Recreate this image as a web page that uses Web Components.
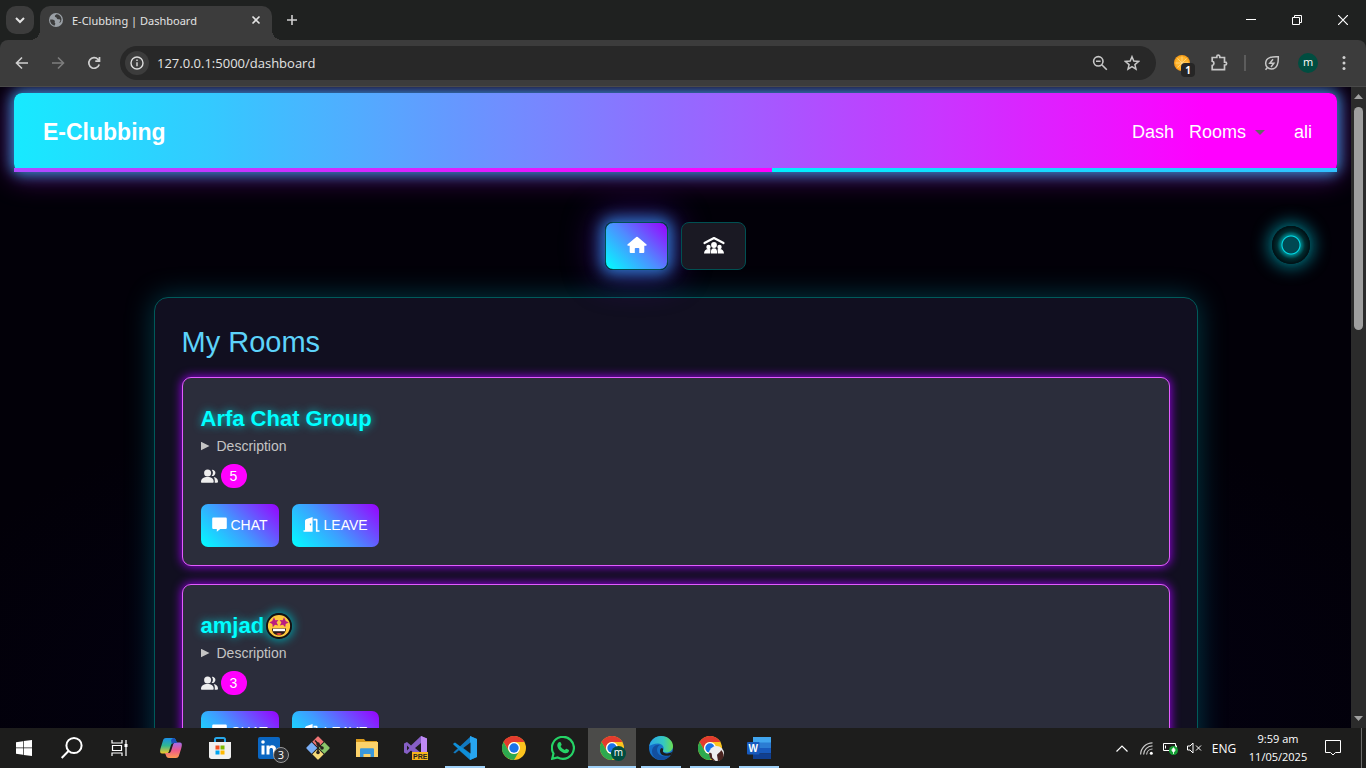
<!DOCTYPE html>
<html lang="en">
<head>
<meta charset="utf-8">
<title>E-Clubbing | Dashboard</title>
<style>
html, body { margin: 0; height: 100%; background: #000; }
body { display: flex; flex-direction: column; overflow: hidden; font-family: "Open Sans", "Noto Sans", sans-serif; }
page-view { flex: 1; min-height: 0; }
</style>
</head>
<body>
<browser-tabs></browser-tabs>
<browser-toolbar></browser-toolbar>
<page-view>
  <club-nav></club-nav>
  <view-switch></view-switch>
  <room-panel heading="My Rooms">
    <room-card members="5">Arfa Chat Group</room-card>
    <room-card members="3">amjad<star-face></star-face></room-card>
  </room-panel>
</page-view>
<task-bar></task-bar>

<script>
const reset = `:host,*{box-sizing:border-box}button,input{font:inherit;color:inherit;background:none;border:0;padding:0;margin:0}
button{display:flex;align-items:center;justify-content:center}a{color:inherit;text-decoration:none}svg{display:block;flex:none}`;

function define(name, css, html) {
  customElements.define(name, class extends HTMLElement {
    constructor() {
      super();
      this.attachShadow({ mode: 'open' }).innerHTML =
        `<style>${reset}${css}</style>` + (typeof html === 'function' ? html(this) : html);
    }
  });
}

const chromeLogo = size => `<svg width="${size}" height="${size}" viewBox="0 0 48 48"><circle cx="24" cy="24" r="24" fill="#fcc31e"/>
<path d="M3.2 12A24 24 0 0 1 44.8 12H24A12 12 0 0 0 13.6 30Z" fill="#e33b2e"/>
<path d="M3.2 12A24 24 0 0 0 24 48L34.4 30A12 12 0 0 1 13.6 30Z" fill="#2da94f"/>
<circle cx="24" cy="24" r="12" fill="#fff"/><circle cx="24" cy="24" r="9.4" fill="#1a73e8"/></svg>`;

define('browser-tabs', `
:host{display:flex;height:40px;background:#1f2120;color:#e3e3e3;padding-left:6px;align-items:flex-end;flex:none}
.search{width:28px;height:28px;border-radius:10px;background:#3c3c3c;align-self:center}
.tab{display:flex;align-items:center;width:232px;height:34px;margin-left:6px;padding:0 8px 6px;border-radius:10px 10px 0 0;background:#3c3c3c;position:relative}
.tab::before,.tab::after{content:"";position:absolute;bottom:0;width:10px;height:10px}
.tab::before{left:-10px;background:radial-gradient(circle at 0 0,transparent 10px,#3c3c3c 10px)}
.tab::after{right:-10px;background:radial-gradient(circle at 100% 0,transparent 10px,#3c3c3c 10px)}
.tab a{flex:1;margin-left:8px;white-space:nowrap;font-family:"Noto Sans",sans-serif;font-size:11px}
.tab button{width:16px;height:28px}.new{width:40px;height:40px}
.win{margin-left:auto;display:flex}.win button{width:46px;height:40px}`, `
<button class="search" aria-label="Search tabs"><svg width="10" height="8" viewBox="0 0 10 8"><path d="M1 2l4 4 4-4" fill="none" stroke="#e3e3e3" stroke-width="2"/></svg></button>
<div class="tab"><svg width="16" height="16" viewBox="0 0 16 16"><circle cx="8" cy="8" r="7" fill="#9aa0a6"/><path d="M2.200 7.600c1.800-.2 4 .2 4.600 1.200.5.800-.6 1.400.2 2.200.8.700 0 2-.6 2.800-2.600-.7-4.600-3.200-4.200-6.200zM8.500 2.200c-.8.800-2 1-1.600 2.200.3.800 1.600.6 1.800 1.500.2 1 1.300 1.600 2.300 1.300 1-.3 1.500.6 1.300 1.600-.1.900-1.100 1.200-.8 2.200 1.600-1 2.200-2.900 1.900-4.600-.5-2.300-2.500-4.200-4.900-4.200z" fill="#3c3c3c"/></svg>
<a href="#">E-Clubbing | Dashboard</a><button aria-label="Close tab"><svg width="10" height="10" viewBox="0 0 10 10"><path d="M1.500 1.500l7 7m0-7l-7 7" stroke="#e3e3e3" stroke-width="1.600"/></svg></button></div>
<button class="new" aria-label="New tab"><svg width="12" height="12" viewBox="0 0 12 12"><path d="M6 1v10M1 6h10" stroke="#d0d0d0" stroke-width="1.600"/></svg></button>
<div class="win">
<button aria-label="Minimize"><svg width="10" height="10"><path d="M0 4.500h10" stroke="#fff"/></svg></button>
<button aria-label="Restore"><svg width="10" height="10" fill="none" stroke="#fff"><path d="M.5 2.500h7v7h-7zM2.500 2.500v-2h7v7h-2"/></svg></button>
<button aria-label="Close"><svg width="10" height="10"><path d="M0 0l10 10M10 0L0 10" stroke="#fff" stroke-width="1.200"/></svg></button>
</div>`);

define('browser-toolbar', `
:host{display:block;background:#1f2120;flex:none}
.bar{display:flex;align-items:center;height:47px;padding:0 4px;background:#3c3c3c;border-radius:8px 8px 0 0;border-bottom:1px solid #4a4a4a;color:#e3e3e3}
.bar>button{width:36px;height:36px;position:relative}
.omni{flex:1;display:flex;align-items:center;height:34px;margin:0 9px 0 8px;padding:0 8px 0 5px;border-radius:17px;background:#282828}
.info{width:24px;height:24px;border-radius:50%;background:#3c3c3c}
input{flex:1;min-width:0;margin:0 8px;font-size:13px;outline:0}
.omni button:not(.info){width:32px;height:32px}
.sep{width:2px;height:16px;margin:0 8px 0 7px;background:#5c5c5c}
.count{position:absolute;left:16px;top:18px;width:14px;height:14px;border-radius:4px;background:#262626;color:#fff;font:bold 10px/14px "Open Sans",sans-serif;text-align:center}
.me{width:20px;height:20px;border-radius:50%;background:#004d40;color:#fff;font:11px/18px "Open Sans",sans-serif}`, `
<div class="bar">
<button aria-label="Back"><svg width="14" height="14" viewBox="0 0 14 14" fill="none" stroke="#d0d0d0" stroke-width="1.600"><path d="M13 7H2M7 1.500L1.500 7 7 12.500"/></svg></button>
<button aria-label="Forward"><svg width="14" height="14" viewBox="0 0 14 14" fill="none" stroke="#7d7d7d" stroke-width="1.600"><path d="M1 7h11M7 1.500L12.500 7 7 12.500"/></svg></button>
<button aria-label="Reload"><svg width="14" height="14" viewBox="0 0 14 14" fill="none" stroke="#d0d0d0" stroke-width="1.700"><path d="M12.200 8.500A5.300 5.300 0 1 1 11 3.300L12.300 4.800M12.500 1v4.200H8.300"/></svg></button>
<div class="omni">
<button class="info" aria-label="Site information"><svg width="14" height="14" viewBox="0 0 14 14" fill="none" stroke="#dcdcdc" stroke-width="1.400"><circle cx="7" cy="7" r="6"/><path d="M7 6.200v4M7 3.600v1.400"/></svg></button>
<input aria-label="Address" value="127.0.0.1:5000/dashboard">
<button aria-label="Zoom"><svg width="16" height="16" viewBox="0 0 16 16" fill="none" stroke="#c7c7c7" stroke-width="1.600"><circle cx="6.300" cy="6.300" r="4.700"/><path d="M9.800 9.800l5 5M4 6.300h4.600"/></svg></button>
<button aria-label="Bookmark"><svg width="16" height="16" viewBox="0 0 16 16" fill="none" stroke="#c7c7c7" stroke-width="1.500"><path d="M8 1.700l1.800 4.400 4.700.4-3.600 3.100 1.100 4.600L8 11.700l-4 2.500 1.100-4.600L1.500 6.500l4.700-.4z"/></svg></button>
</div>
<button aria-label="Extension, 1"><svg width="18" height="18" viewBox="0 0 18 18"><circle cx="8" cy="9" r="8" fill="#f9a01b"/><circle cx="8" cy="9" r="6.500" fill="#ffb52e"/><path d="M8 2.500v13M1.500 9h13M3.400 4.400l9.200 9.200m0-9.200l-9.200 9.200" stroke="#ffd98a" stroke-width=".8"/></svg><span class="count">1</span></button>
<button aria-label="Extensions"><svg width="18" height="18" viewBox="0 0 18 18" fill="none" stroke="#c7c7c7" stroke-width="1.700"><path d="M2.200 3.500h4.600V2.600a1.500 1.500 0 0 1 3 0v.9h4.700v4.700h.7a1.400 1.400 0 0 1 0 2.800h-.7v4.700H2.200v-4.200a2.200 2.200 0 0 0 0-4.300z"/></svg></button>
<span class="sep"></span>
<button aria-label="Performance"><svg width="16" height="16" viewBox="0 0 16 16" fill="none" stroke="#c7c7c7" stroke-width="1.500"><path d="M14.300 1.700C8 1.300 2 2.500 1.700 8c-.2 3.500 2.400 6 5.800 6 6 0 7-6.500 6.800-12.300zM1.500 14.800L3.500 12.500M9 4.200L5.800 8.300h4L7 12"/></svg></button>
<button aria-label="Profile"><span class="me">m</span></button>
<button aria-label="Menu"><svg width="4" height="16" fill="#d0d0d0"><circle cx="2" cy="2.500" r="1.500"/><circle cx="2" cy="8" r="1.500"/><circle cx="2" cy="13.500" r="1.500"/></svg></button>
</div>`);

define('page-view', `
:host{display:flex;background:#010006;color:#fff;font-family:"Liberation Sans",Arial,sans-serif;overflow:hidden}
main{flex:1;min-width:0;overflow:hidden;position:relative;padding:6px 14px 0;background:radial-gradient(ellipse 60% 60% at 50% 100%,#04021a,transparent),#020008}
.cursor{position:absolute;top:139px;right:41px;width:38px;height:38px;border-radius:50%;background:radial-gradient(circle,#004852 8px,#00e4f0 9px,#007a80 10px,#002c30 14px,#001418 18px);box-shadow:0 0 4px #004c55,0 0 16px 4px #006c7a}
.scroll{width:15px;flex:none;background:#2b2b2b;display:flex;flex-direction:column;align-items:center;padding:7px 0}
.thumb{width:9px;height:223px;border-radius:5px;background:#9f9f9f;margin:8px 0 auto}`, `
<main><slot></slot><div class="cursor"></div></main>
<div class="scroll"><svg width="9" height="5"><path d="M0 5L4.500 0 9 5z" fill="#a0a0a0"/></svg><div class="thumb"></div><svg width="9" height="5"><path d="M0 0l4.500 5L9 0z" fill="#a0a0a0"/></svg></div>`);

define('club-nav', `
:host{display:block}
header{position:relative;display:flex;align-items:center;height:79px;padding:0 25px 0 29px;border-radius:8px;background:linear-gradient(90deg,#17eaff,#34c9ff 15%,#f0f 90%);box-shadow:0 0 13px 3px rgba(50,180,240,.75),0 2px 28px 4px rgba(190,20,230,.42)}
header::after{content:"";position:absolute;left:0;right:0;bottom:0;height:4px;background:linear-gradient(90deg,#ad4cff,#f0f 57.300%,#00f0ff 57.300%,#33c0ff)}
.brand{font-size:23px;font-weight:bold}
nav{margin-left:auto;display:flex;align-items:center;font-size:18px}
nav button{margin:0 29px 0 15px}
nav svg{margin-left:9px}`, `
<header><a class="brand" href="#">E-Clubbing</a>
<nav><a href="#">Dash</a><button aria-haspopup="true">Rooms<svg width="10" height="5"><path d="M0 0h10L5 5z" fill="#666"/></svg></button><a href="#">ali</a></nav></header>`);

define('view-switch', `
:host{display:flex;justify-content:center;gap:13px;margin-top:50px}
button{width:65px;height:48px;padding-bottom:2px;border-radius:8px;border:1px solid #005052;background:#1a1923}
.on{width:63px;background:linear-gradient(45deg,#0ff,#4f8cff 50%,#9a00ff);box-shadow:0 0 15px 4px rgba(50,160,255,.75),0 0 34px 10px rgba(100,20,200,.4)}`, `
<button class="on" aria-label="My rooms"><svg width="20" height="18" viewBox="0 0 20 18" fill="#fff"><path d="M9.300 1a1 1 0 0 1 1.400 0l8.600 7.200c.8.700.4 1.600-.5 1.600h-1.500V16a1 1 0 0 1-1 1h-4v-4.200a.7.700 0 0 0-.7-.7H8.500a.7.700 0 0 0-.7.700V17H3.700a1 1 0 0 1-1-1V9.800H1.200c-.9 0-1.300-.9-.5-1.600z"/></svg></button>
<button aria-label="All rooms"><svg width="22" height="18" viewBox="0 0 22 18" fill="#fff"><path d="M1.500 7L11 2l9.500 5" fill="none" stroke="#fff" stroke-width="2.200" stroke-linecap="round" stroke-linejoin="round"/><circle cx="11" cy="9" r="2.900"/><circle cx="5.500" cy="11" r="2.200"/><circle cx="16.500" cy="11" r="2.200"/><path d="M1 17.500c0-2.800 1.700-4.600 4.500-4.600.9 0 1.500.1 2 .5l-.5 4.100zM21 17.500c0-2.800-1.700-4.600-4.500-4.600-.9 0-1.500.1-2 .5l.5 4.100zM7.700 17.500c0-3.500 1-5.300 3.300-5.300s3.300 1.800 3.300 5.300z"/></svg></button>`);

define('room-panel', `
:host{display:block;max-width:1044px;margin:27px auto 0;padding:27px;border:1px solid #005a5a;border-radius:14px;background:#110f20;box-shadow:0 0 28px rgba(0,140,160,.42)}
h2{margin:0 0 17px;font-size:29px;line-height:35px;font-weight:normal;color:#5dd3fa}
.list{display:flex;flex-direction:column;gap:18px}`, el => `
<h2>${el.getAttribute('heading')}</h2><div class="list"><slot></slot></div>`);

define('room-card', `
:host{display:block;padding:28px 18px 18px;border:1px solid #e25cff;border-radius:9px;background:#2b2d3b;box-shadow:0 0 10px 1px #8c00d8}
h3{display:flex;align-items:center;margin:0;font-size:22px;line-height:26px;color:#0ff;text-shadow:0 0 9px #00c8d0}
details{margin-top:3px;font-size:14px;line-height:22px;color:#c4c4c4}
summary{display:flex;align-items:center;gap:7px;list-style:none}
summary::before{content:"";width:9px;height:9px;background:#c4c4c4;clip-path:polygon(0 0,100% 50%,0 100%)}
.members{display:flex;align-items:center;gap:3px;margin-top:7px}
.members span{width:26px;height:24px;border-radius:12px;background:#f0f;font-size:14px;line-height:24px;text-align:center}
.actions{display:flex;gap:13px;margin-top:16px}
.actions button{gap:4px;height:43px;padding:0 11px 2px;border-radius:7px;background:linear-gradient(45deg,#0ff,#3f9cff 45%,#9a00ff);font-size:14px}`, el => `
<h3><slot></slot></h3>
<details><summary>Description</summary></details>
<div class="members"><svg width="17" height="14" viewBox="0 0 17 14" fill="#eee"><path d="M11 .8a3.100 3.100 0 1 1-.4 6.100 4.700 4.700 0 0 0 .3-5.900zM12.600 8c2.600.3 4.400 2 4.400 4.500 0 .8-.3 1.200-1 1.200h-2.300c.3-2.600 0-4.300-1.100-5.700z"/><circle cx="6.600" cy="3.900" r="3.500"/><path d="M0 13C0 9.800 2.500 8 6.500 8s6.200 1.800 6.200 5c0 .5-.2.700-.7.700H.7C.2 13.700 0 13.500 0 13z"/></svg><span>${el.getAttribute('members')}</span></div>
<div class="actions">
<button><svg width="15" height="15" viewBox="0 0 15 15" fill="#fff"><path d="M1.500.5h12a1.200 1.200 0 0 1 1.300 1.200v9a1.200 1.200 0 0 1-1.300 1.200H8.300L4.800 14.800V11.900H1.500A1.200 1.200 0 0 1 .2 10.700v-9A1.200 1.200 0 0 1 1.500.5z"/></svg>CHAT</button>
<button><svg width="17" height="15" viewBox="0 0 17 15" fill="#fff"><path d="M3 2.200L9.600 0v14.800H.5v-1.600H2V3.500zM7.500 6.600a.7.900 0 1 0 .01 0z" fill-rule="evenodd"/><path d="M10.500 1.800h3a1 1 0 0 1 1 1v10.400h2v1.600h-3.600V3.400h-2.400z"/></svg>LEAVE</button>
</div>`);

define('star-face', `
:host{display:block;margin-left:2px;border-radius:50%;box-shadow:0 0 10px 2px #009aa2}`, `
<svg width="26" height="26" viewBox="0 0 26 26" role="img" aria-label="star-struck"><circle cx="13" cy="13" r="12" fill="#ffc83d" stroke="#111" stroke-width="1.800"/><path d="M8 4.300l1.300 2.900 3.100-.3-1.800 2.700 1.600 2.800-3.200-.6-2.200 2.400-.5-3.300-3-1.300 2.900-1.500z" fill="#bb1d80"/><path d="M18 4.300l-1.300 2.900-3.100-.3 1.800 2.700-1.600 2.800 3.200-.6 2.200 2.400.5-3.300 3-1.300-2.900-1.500z" fill="#bb1d80"/><path d="M6 15.500h14c0 4-2.800 6.800-7 6.800s-7-2.800-7-6.800z" fill="#2a1a1a"/><path d="M7 15.800h12v2.400H7z" fill="#fff"/><path d="M10 21a4 3 0 0 1 6 0c-2 1.200-4 1.200-6 0z" fill="#e8413c"/></svg>`);

define('task-item', `
:host{display:block;width:48px;height:40px;flex:none}
button{width:100%;height:40px;position:relative}
:host([open]) button::after{content:"";position:absolute;left:4px;right:4px;bottom:0;height:2px;background:#9fd0f8}
:host([current]) button{background:#4b4b49}
:host([current]) button::after{left:0;right:0}`, el => `
<button aria-label="${el.getAttribute('label')}"><slot></slot></button>`);

const app = (label, svg, state = '') => `<task-item label="${label}" ${state}>${svg}</task-item>`;
const s24 = body => `<svg width="24" height="24" viewBox="0 0 24 24">${body}</svg>`;

define('task-bar', `
:host{display:flex;height:40px;background:#1d1d1c;color:#fff;flex:none;font-size:12px}
.apps{display:flex;gap:1px;margin-left:3px}
.stack{display:flex;position:relative}
.badge{position:absolute;left:15px;top:10px;width:16px;height:16px;border-radius:50%;background:#303236;border:1px solid #999;font-size:11px;line-height:14px;text-align:center}
.mini{position:absolute;left:11px;top:10px;width:15px;height:15px;border-radius:50%;background:#004d40;font-size:10px;line-height:13px;text-align:center}
.photo{position:absolute;left:11px;top:10px}
.tray{margin-left:auto;display:flex;align-items:center;padding-right:4px}
.tray button{width:24px;height:40px}
.tray .lang{width:34px;margin-left:1px}
.clock{width:74px;text-align:center;line-height:18px;font-size:11px}
.tray .note{width:36px}
.edge{width:1px;height:40px;background:#6b6b6b;margin-left:10px}`, `
${app('Start', `<svg width="16" height="16" viewBox="0 0 16 16" fill="#fff"><path d="M0 2.200L7 1.200v6.400H0zM7.700 1.100L16 0v7.600H7.700zM0 8.300h7v6.500l-7-1zM7.700 8.300H16V16l-8.300-1.100z"/></svg>`)}
${app('Search', `<svg width="24" height="24" viewBox="0 0 24 24" fill="none" stroke="#fff" stroke-width="2"><circle cx="14" cy="9.500" r="7.600"/><path d="M8.500 15L1.700 22"/></svg>`)}
${app('Task view', `<svg width="18" height="16" viewBox="0 0 18 16" fill="none" stroke="#fff" stroke-width="1.200"><path d="M1 0v3h10V0M1.500 5.500h9v5h-9zM1 16v-3h10v3M15 0v16"/><path d="M13.500 4h3v3h-3z" fill="#fff" stroke="none"/></svg>`)}
<div class="apps">
${app('Copilot', s24(`<defs><linearGradient id="ca" x2="0" y2="1"><stop stop-color="#1b8fe8"/><stop offset=".5" stop-color="#30b890"/><stop offset="1" stop-color="#f6c828"/></linearGradient><linearGradient id="cb" x2="0" y2="1"><stop stop-color="#a06cf0"/><stop offset=".5" stop-color="#ee5a8a"/><stop offset="1" stop-color="#ff9a50"/></linearGradient></defs><path d="M7 2h7c2 0 2.500 1 3 2.500L18 7h-3c-2 0-2.700 1-3.200 2.600l-2 6.200C9.300 17 8.500 17.500 7 17.500H3C.5 17.500 1 14 1.800 11.500L4 4.500C4.700 2.700 5.500 2 7 2z" fill="url(#ca)"/><path d="M17 22h-7c-2 0-2.500-1-3-2.500L6 17h3c2 0 2.700-1 3.200-2.600l2-6.200C14.700 7 15.500 6.500 17 6.500h4c2.500 0 2 3.500 1.200 6L20 19.500c-.7 1.800-1.500 2.500-3 2.500z" fill="url(#cb)"/><path d="M14 2c2 0 2.500 1 3 2.500L18 7h-3c-1 0-1.800.3-2.300.9L12 4z" fill="#1b4fb8"/>`))}
${app('Store', s24(`<path d="M7 6V3.500C7 2.500 7.500 2 8.500 2h7c1 0 1.500.5 1.500 1.500V6" fill="none" stroke="#28a8ea" stroke-width="2"/><path d="M1 6h22v14.500c0 1.500-1 2.500-2.500 2.500h-17C2 23 1 22 1 20.500z" fill="#f0f0f0"/><path d="M7.500 9.500h4v4h-4z" fill="#f25022"/><path d="M12.500 9.500h4v4h-4z" fill="#7fba00"/><path d="M7.500 14.500h4v4h-4z" fill="#00a4ef"/><path d="M12.500 14.500h4v4h-4z" fill="#ffb900"/>`))}
${app('LinkedIn', `<span class="stack"><svg width="22" height="22" viewBox="0 0 22 22"><rect width="22" height="22" rx="2" fill="#0a66c2"/><path d="M3.500 8.500h3v9h-3zM8.500 8.500h3v1.200c1.400-2.200 6.500-2 6.500 2.500v5.300h-3v-4.700c0-2.500-3.500-2.500-3.500 0v4.700h-3z" fill="#fff"/><circle cx="5" cy="5" r="1.800" fill="#fff"/></svg><span class="badge">3</span></span>`)}
${app('Git', s24(`<g transform="rotate(45 12 12)"><path d="M3.500 4.500a1 1 0 0 1 1-1h7v8h-8z" fill="#f07575"/><path d="M12.500 3.500h7a1 1 0 0 1 1 1v7h-8z" fill="#8bc66a"/><path d="M3.500 12.500h8v8h-7a1 1 0 0 1-1-1z" fill="#7aaef5"/><path d="M12.500 12.500h8v7a1 1 0 0 1-1 1h-7z" fill="#f5d978"/></g><path d="M9 4.500l6.500 7M12 7.500v9" stroke="#26211c" stroke-width="1.600"/><circle cx="12" cy="8" r="1.800" fill="#26211c"/><circle cx="16" cy="12" r="1.800" fill="#26211c"/><circle cx="12" cy="16.500" r="1.800" fill="#26211c"/>`))}
${app('File Explorer', s24(`<path d="M1 3h8l1.500 2H22v3H1z" fill="#d99a1c"/><path d="M1 6h22v15H1z" fill="#fcd26a"/><path d="M5 21v-7.500c0-.8.500-1.300 1.300-1.300h11.400c.8 0 1.300.5 1.300 1.300V21h-3.500v-3h-7v3z" fill="#3a98dc"/>`))}
${app('Visual Studio Preview', s24(`<path d="M17 0l6 2.500v19L17 24 7 14.500 3 18l-3-1.500v-9L3 6l4 3.500z" fill="#865fc5"/><path d="M17 0l6 2.500v19L17 24z" fill="#c08af5"/><path d="M17 7l-6 5 6 5zM3 9.500v5L5.300 12z" fill="#1d1d1c"/><path d="M8 16h16v8H8z" fill="#f6b51c"/><text x="9" y="23" font-size="7" font-weight="bold" font-family="Liberation Sans" fill="#222">PRE</text>`))}
${app('VS Code', s24(`<path d="M17 0l7 3v18l-7 3L6 14.300 2 17.500.3 16.500 17 1z" fill="#1279bf"/><path d="M.3 7.500L2 6.500 17.500 18v5.800L.3 8.500z" fill="#0f8fd8"/><path d="M17 0l7 3v18l-7 3z" fill="#27a5f0"/><path d="M17.500 6.500v11L10.300 12z" fill="#1d1d1c"/>`), 'open')}
${app('Chrome', chromeLogo(24))}
${app('WhatsApp', s24(`<path d="M2.500 17.500a11 11 0 1 1 4.200 4L1.200 22.800z" fill="none" stroke="#25d366" stroke-width="2.200"/><path d="M8.500 6c.8-.2 1.100 0 1.400.8l.7 1.800c.2.500-.7 1.300-1 1.700.8 1.800 2.300 3 4.200 3.800.5-.4 1.100-1.600 1.700-1.300l2 1c.6.300.5.700.4 1.300-.3 1.700-2.300 2.400-3.800 2.100-3.800-.8-7-3.900-7.700-6.800C5.900 8.500 7 6.300 8.500 6z" fill="#25d366"/>`))}
${app('Chrome, profile m', `<span class="stack">${chromeLogo(24)}<span class="mini">m</span></span>`, 'open current')}
${app('Edge', s24(`<defs><linearGradient id="eg"><stop stop-color="#2aa8e8"/><stop offset=".6" stop-color="#35c8c0"/><stop offset="1" stop-color="#6ade50"/></linearGradient></defs><circle cx="12" cy="12" r="12" fill="#1670c8"/><path d="M.3 10C1.500 4 6.500 0 12 0c7 0 12 5 12 10 0 4-3 6.500-6.500 6.500-2.500 0-4-1-3.500-2 2-3-.5-7-5-7C5 7.500 1.500 9 .3 10z" fill="url(#eg)"/><path d="M8 14c0-2 1-4.500 3-5-4-1-8 2-8 6.500 0 5 4.500 8.500 9 8.500 4 0 7.500-1.800 9.500-4.500-5 2-13 1-13.500-5.500z" fill="#124fa0"/><path d="M14 14.500c-1 2.500 4.500 4.500 9.500 1.300l-1.500 3.200c-5 2-11 .5-11-4 0-2 1-3 2-3 1.200.5 1.200 1.700 1 2.500z" fill="#1d1d1c"/>`), 'open')}
${app('Chrome, second profile', `<span class="stack">${chromeLogo(24)}<svg class="photo" width="15" height="15" viewBox="0 0 15 15"><circle cx="7.500" cy="7.500" r="7.500" fill="#eee"/><path d="M0 7c2-1 3 0 3 3s2 2 3 5c-4-.5-6-4-6-8zM8 9c1-2 4-3 4-5 3 3 3 6 2 8-2 2-3 3-5 3z" fill="#4a2420"/></svg></span>`, 'open')}
${app('Word', s24(`<path d="M6 1h18v6H6z" fill="#41a5ee"/><path d="M6 6.500h18V12H6z" fill="#2b7cd3"/><path d="M6 12h18v5.500H6z" fill="#185abd"/><path d="M6 17.500h18V23H6z" fill="#103f91"/><rect y="6" width="12.500" height="12.500" rx="1" fill="#185abd"/><text x="1.500" y="16" font-size="10" font-weight="bold" font-family="Liberation Sans" fill="#fff">W</text>`), 'open')}
</div>
<div class="tray">
<button aria-label="Hidden icons"><svg width="12" height="7"><path d="M.5 6.500L6 1l5.500 5.500" fill="none" stroke="#fff" stroke-width="1.200"/></svg></button>
<button aria-label="Network"><svg width="13" height="13" viewBox="0 0 13 13" fill="none" stroke="#c8c8c8" stroke-width="1.200"><path d="M.6 12.500A12 12 0 0 1 12.500.8M3.600 12.500A9 9 0 0 1 12.500 3.900M6.600 12.500A6 6 0 0 1 12.500 7"/><circle cx="11.300" cy="11.300" r="1.500" fill="#fff" stroke="none"/></svg></button>
<button aria-label="Battery"><svg width="16" height="14" viewBox="0 0 16 14"><path d="M1.500 2.500h12v7h-12zM14.500 4.500v3M3.500 4.500v3" fill="none" stroke="#fff"/><circle cx="11.500" cy="9.500" r="4.500" fill="#15a035"/><path d="M11.500 6.800c2 1.500 2 3.600 0 4.200-2-.6-2-2.700 0-4.200zM11.500 9v4" fill="#fff" stroke="#fff" stroke-width=".8"/></svg></button>
<button aria-label="Volume muted"><svg width="15" height="12" viewBox="0 0 15 12" fill="none" stroke="#fff"><path d="M.5 4v4H3l3 3V1L3 4zM9 3.500l5 5m0-5l-5 5"/></svg></button>
<button class="lang">ENG</button>
<div class="clock">9:59 am<br>11/05/2025</div>
<button class="note" aria-label="Notifications"><svg width="16" height="16" viewBox="0 0 16 16" fill="none" stroke="#fff"><path d="M.5.5h15v12h-5L8 15l-2.500-2.500h-5z"/></svg></button>
<span class="edge"></span>
</div>`);
</script>
</body>
</html>
